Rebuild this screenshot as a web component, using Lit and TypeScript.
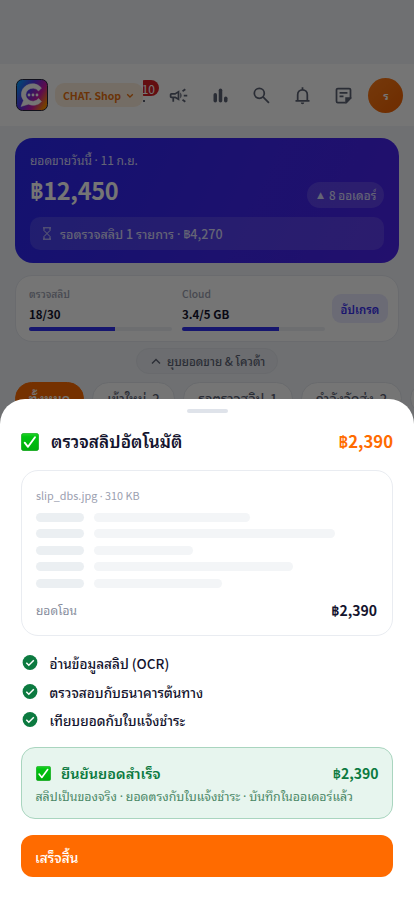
import { LitElement, html, css, svg } from "lit";
import { customElement } from "lit/decorators.js";

const emoji = (size: number) => html`<svg width=${size} height=${size} viewBox="0 0 18 18">
  <defs><linearGradient id="eg" x1="0" y1="0" x2="0" y2="1"><stop offset="0" stop-color="#23d42a"/><stop offset=".2" stop-color="#00c410"/><stop offset="1" stop-color="#00ae0c"/></linearGradient></defs>
  <rect x=".3" y=".3" width="17.4" height="17.4" rx="2.6" fill="url(#eg)" stroke="#0d9d16" stroke-width=".6"/>
  <path d="M3.7 9.7 7 13.8 14 4.2" fill="none" stroke="#fff" stroke-width="1.9" stroke-linecap="round" stroke-linejoin="round"/></svg>`;

// The CJK face gives "·" and "▲" a full-width cell, so these two use a proportional face.
const narrow = (text: string) => text.split(/([·▲])/).map((p) => (p === "·" || p === "▲" ? html`<i>${p}</i>` : p));

const icon = (body: unknown) => html`<svg width="21" height="21" viewBox="0 0 24 24" fill="none" stroke="currentColor" stroke-width="2">${body}</svg>`;

const icons = {
  campaign: svg`<path stroke="none" fill="currentColor" d="M18 11v2h4v-2h-4zm-2 6.610c.96.71 2.210 1.650 3.200 2.390.4-.53.8-1.070 1.200-1.600-.99-.74-2.240-1.680-3.200-2.400-.4.540-.8 1.080-1.200 1.610zM20.400 5.600c-.4-.53-.8-1.070-1.200-1.600-.99.740-2.240 1.680-3.200 2.400.4.530.8 1.070 1.200 1.600.96-.72 2.210-1.650 3.200-2.400zM4 9c-1.100 0-2 .9-2 2v2c0 1.100.9 2 2 2h1v4h2v-4h1l5 3V6L8 9H4zm5.030 1.710L11 9.530v4.940l-1.970-1.180-.48-.29H4v-2h4.550l.48-.29zM15.500 12c0-1.330-.58-2.530-1.500-3.350v6.690c.92-.81 1.500-2.010 1.500-3.340z"/>`,
  chart: svg`<g fill="currentColor" stroke="none"><rect x="4" y="9" width="4" height="11" rx="2"/><rect x="10" y="4" width="4" height="16" rx="2"/><rect x="16" y="13" width="4" height="7" rx="2"/></g>`,
  search: svg`<circle cx="9.500" cy="9.500" r="5.700"/><path d="m13.700 13.700 6.800 6.800"/>`,
  bell: svg`<path d="M4 18h16M6.500 18v-7a5.500 5.500 0 0 1 11 0v7M12 2.500v3"/><path d="M10 20h4a2 2 0 0 1-4 0z" fill="currentColor" stroke="none"/>`,
  note: svg`<path d="M14.500 20H5.500A1.500 1.500 0 0 1 4 18.500v-13A1.500 1.500 0 0 1 5.500 4h13A1.500 1.500 0 0 1 20 5.500V15M7.500 9h9M7.500 13h4.500"/><path d="M21 14v1.500L15.500 21H14v-7z" fill="currentColor" stroke="none"/>`,
};

@customElement("app-root")
export class AppRoot extends LitElement {
  static styles = css`
    :host { display: block; position: relative; width: 414px; height: 900px; overflow: hidden; background: #f1f4f9; color: #14142e; font: 12px/16px "Noto Sans CJK SC", "Noto Sans Thai Looped", "Noto Sans Thai", "Noto Sans", sans-serif; }
    * { box-sizing: border-box; }
    svg { display: block; flex: none; }
    span, b { white-space: nowrap; }
    i { font-family: "Noto Sans", sans-serif; font-style: normal; line-height: 1; }
    .row { display: flex; align-items: center; }
    .between { justify-content: space-between; }
    .page { padding-top: 64px; height: 100%; }
    header { display: flex; align-items: center; height: 62px; background: #fff; padding: 0 10px 0 16px; color: #5d6375; }
    .shop { width: 88px; height: 24px; margin-left: 7px; border-radius: 9px; background: #fdeedd; color: #ea7210; font-weight: 700; font-size: 10.500px; letter-spacing: -.05px; padding: 2px 9px 0 8px; display: flex; align-items: center; justify-content: space-between; }
    .clip { width: 16px; height: 32px; overflow: hidden; position: relative; }
    .badge { position: absolute; right: 0; top: 1px; width: 22px; height: 16px; border-radius: 8px; background: #d81f26; color: #fff; line-height: 17px; text-align: right; padding-right: 4px; }
    .bit { position: absolute; left: 0; top: 21px; width: 2px; height: 2px; background: #5d6375; }
    .tools { display: flex; gap: 20.300px; margin-left: 9.300px; }
    .avatar { width: 35px; height: 35px; border-radius: 50%; margin-left: 14px; background: linear-gradient(135deg, #ff7d19, #f06000); color: #fff; display: grid; place-items: center; font-weight: 600; font-size: 11px; }
    .sales { margin: 12px 15px 0; height: 125px; border-radius: 18px; padding: 14px 15px 12px; background: linear-gradient(115deg, #2b28f2, #4b23ed); color: #dad9ff; }
    .date { font-size: 12px; line-height: 16px; }
    .sum { height: 49px; align-items: center; }
    .big { font-size: 23.500px; line-height: 32px; font-weight: 700; letter-spacing: -.3px; color: #fff; margin-top: -5px; }
    .orders { height: 26px; width: 77px; border-radius: 13px; background: #ffffff25; font-weight: 500; font-size: 11.700px; display: flex; align-items: center; justify-content: center; margin-top: 5px; white-space: pre; }
    .pending { height: 33px; border-radius: 10px; background: #ffffff20; padding-left: 12px; gap: 8px; font-weight: 500; font-size: 12.500px; }
    .quota { margin: 12px 15px 0; height: 67px; border: 1px solid #e7eaf0; background: #fff; border-radius: 17px; padding: 0 10px 0 13px; display: flex; align-items: center; }
    .meter { width: 143px; margin-right: 10px; }
    .meter + .meter { margin-right: 7px; }
    .label { display: block; font-size: 10.300px; line-height: 16px; color: #9ba0b0; font-weight: 500; }
    .value { display: block; font-size: 11.500px; line-height: 24px; font-weight: 700; }
    .track { height: 4px; border-radius: 2px; background: #edf0f5; overflow: hidden; margin-top: 1px; }
    .fill { height: 100%; background: #3030ef; }
    .upgrade { width: 56px; height: 29px; border-radius: 9px; background: #e9e9ff; color: #3930ef; font-weight: 600; font-size: 11.400px; display: grid; place-items: center; }
    .fold { width: 142px; height: 26px; margin: 6px auto 8px; border-radius: 13px; background: #ebeef3; border: 1px solid #e4e7ed; color: #5d6375; justify-content: center; gap: 6px; font-weight: 500; font-size: 11.600px; padding-left: 2px; }
    .tabs { display: flex; gap: 8px; margin-left: 15px; }
    .tab { flex: none; height: 33px; border: 1px solid #e4e7ed; border-radius: 17px; background: #fff; color: #5d6375; font-weight: 500; font-size: 13px; display: grid; place-items: center; white-space: pre; }
    .tab.on { background: #ff6b00; border-color: #ff6b00; color: #fff; font-weight: 600; }
    .scrim { position: absolute; inset: 0; background: #0000008a; }
    .sheet { position: absolute; left: 0; right: 0; bottom: 0; height: 501px; background: #fff; border-radius: 25px 25px 0 0; padding: 10px 21px; }
    .handle { width: 41px; height: 4px; border-radius: 2px; background: #dfe3ea; margin: 0 auto; }
    .title { height: 57px; font-size: 17px; line-height: 24px; font-weight: 600; }
    .title .orange { font-size: 16.700px; margin-top: -2px; }
    .title .name { margin-left: 12px; margin-top: -1px; font-size: 17.200px; }
    .orange { color: #ff6b00; }
    .slip { height: 165.500px; border: 1px solid #e9ecf1; border-radius: 17px; padding: 16px 15px 0 14px; }
    .file { display: block; font-size: 10.800px; color: #9ba0b0; line-height: 17px; margin-bottom: 9px; }
    .line { display: flex; gap: 10px; margin-bottom: 7.400px; }
    .key, .val { height: 9px; border-radius: 4.500px; background: #ebeff2; }
    .key { width: 47.500px; }
    .val { background: #f3f5f7; }
    .total { margin-top: 10.500px; height: 24px; color: #858b9b; }
    .total b { color: #14142e; font-size: 14px; }
    .checks { margin-top: 12.500px; }
    .check { height: 28.800px; gap: 11.500px; font-weight: 500; font-size: 13.550px; }
    .check span { margin-top: 1px; }
    .ok { margin-top: 12.500px; height: 72.500px; border-radius: 14px; border: 1px solid #a9d5bf; background: #e7f5ee; padding: 12.500px 13.500px 0; color: #0c7a40; font-size: 14px; }
    .ok .top { height: 26px; font-weight: 600; }
    .ok .name { margin-left: 10.500px; font-size: 14.500px; }
    .desc { display: block; font-size: 12.400px; color: #4b8867; line-height: 21px; }
    .done { margin-top: 16px; height: 41.500px; border-radius: 12px; background: #ff6b00; color: #fff; font-weight: 500; font-size: 13.700px; padding-left: 14px; padding-top: 1px; }
  `;

  private meter(label: string, value: string, pct: number) {
    return html`<div class="meter"><span class="label">${label}</span><span class="value">${value}</span>
      <div class="track"><div class="fill" style="width:${pct}%"></div></div></div>`;
  }

  render() {
    return html`
      <div class="page">
        <header>
          <svg width="32" height="32" viewBox="0 0 32 32">
            <defs><linearGradient id="lg" x1="0" y1=".1" x2="1" y2=".7"><stop offset="0" stop-color="#00a2ff"/><stop offset=".4" stop-color="#5237e8"/><stop offset=".72" stop-color="#cb1aaa"/><stop offset="1" stop-color="#ff8b00"/></linearGradient></defs>
            <rect x=".5" y=".5" width="31" height="31" rx="6" fill="url(#lg)" stroke="#27273b"/>
            <path d="M25.500 9A10.500 10 0 1 0 7.500 21.500L5 27.500l7.500-2.300A10.500 10 0 0 0 25.500 22.500L22.500 19.500a7 6.500 0 1 1 0-7.500z" fill="#fff" stroke="#fff" stroke-width=".5" stroke-linejoin="round"/>
            <g fill="#fff"><circle cx="13" cy="16" r="1.400"/><circle cx="17" cy="16" r="1.400"/><circle cx="21" cy="16" r="1.400"/></g>
          </svg>
          <div class="shop"><span>CHAT. Shop</span><svg width="8" height="6" viewBox="0 0 8 6"><path d="m1.200 1.200 2.800 2.800 2.800-2.800" fill="none" stroke="currentColor" stroke-width="1.300"/></svg></div>
          <div class="clip"><div class="bit"></div><div class="badge">10</div></div>
          <div class="tools">${[icons.campaign, icons.chart, icons.search, icons.bell, icons.note].map(icon)}</div>
          <div class="avatar">ร</div>
        </header>
        <section class="sales">
          <span class="date">${narrow("ยอดขายวันนี้ · 11 ก.ย.")}</span>
          <div class="row between sum"><span class="big">฿12,450</span><span class="orders">${narrow("▲ 8 ออเดอร์")}</span></div>
          <div class="row pending"><svg width="10" height="13" viewBox="0 0 10 13" fill="none" stroke="currentColor"><path d="M1 .8h8M1 12.200h8M2 1v2.500l3 3 3-3V1M2 12V9.500l3-3 3 3V12"/></svg><span>${narrow("รอตรวจสลิป 1 รายการ · ฿4,270")}</span></div>
        </section>
        <section class="quota">${this.meter("ตรวจสลิป", "18/30", 60)}${this.meter("Cloud", "3.4/5 GB", 68)}<span class="upgrade">อัปเกรด</span></section>
        <div class="row fold"><svg width="10" height="7" viewBox="0 0 10 7"><path d="m1 5.500 4-4 4 4" fill="none" stroke="currentColor" stroke-width="1.400"/></svg><span>ยุบยอดขาย &amp; โควต้า</span></div>
        <div class="tabs">${([["ทั้งหมด", 69], ["เข้าใหม่  2", 83], ["รอตรวจสลิป  1", 110], ["กำลังจัดส่ง  2", 101], ["", 80]] as [string, number][]).map(([t, w], i) => html`<span class="tab ${i ? "" : "on"}" style="width:${w}px">${t}</span>`)}</div>
      </div>
      <div class="scrim"></div>
      <section class="sheet">
        <div class="handle"></div>
        <div class="row between title"><div class="row">${emoji(18)}<span class="name">ตรวจสลิปอัตโนมัติ</span></div><span class="orange">฿2,390</span></div>
        <div class="slip">
          <span class="file">${narrow("slip_dbs.jpg · 310 KB")}</span>
          ${[156, 241.5, 99.5, 199, 128].map((w) => html`<div class="line"><div class="key"></div><div class="val" style="width:${w}px"></div></div>`)}
          <div class="row between total"><span>ยอดโอน</span><b>฿2,390</b></div>
        </div>
        <div class="checks">${["อ่านข้อมูลสลิป (OCR)", "ตรวจสอบกับธนาคารต้นทาง", "เทียบยอดกับใบแจ้งชำระ"].map((t) => html`<div class="row check"><svg width="17" height="17" viewBox="0 0 17 17"><circle cx="9" cy="8.500" r="7.400" fill="#0c7a40"/><path d="m5.300 8.700 2.500 2.500 5-5" fill="none" stroke="#fff" stroke-width="1.500"/></svg><span>${t}</span></div>`)}</div>
        <div class="ok">
          <div class="row between top"><div class="row">${emoji(15)}<span class="name">ยืนยันยอดสำเร็จ</span></div><span>฿2,390</span></div>
          <span class="desc">${narrow("สลิปเป็นของจริง · ยอดตรงกับใบแจ้งชำระ · บันทึกในออเดอร์แล้ว")}</span>
        </div>
        <div class="row done"><span>เสร็จสิ้น</span></div>
      </section>`;
  }
}
